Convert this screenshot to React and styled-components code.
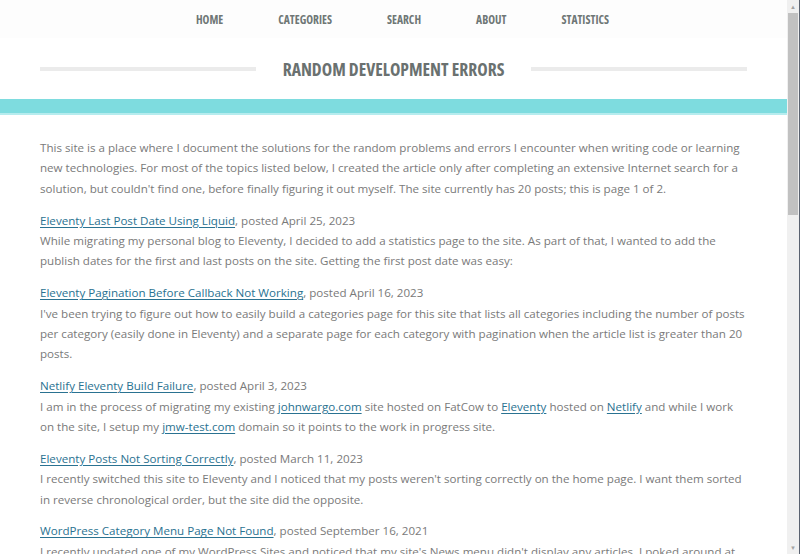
import React from "react";
import styled, { createGlobalStyle } from "styled-components";

const Global = createGlobalStyle`
  html, body { margin: 0; padding: 0; height: 100%; overflow: hidden; background: #fff; }
  #root { height: 100%; }
`;

const Frame = styled.div`
  display: flex;
  height: 554px;
  width: 800px;
`;

const Page = styled.div`
  flex: 1;
  min-width: 0;
  overflow: hidden;
  font-family: "Open Sans", "Liberation Sans", sans-serif;
`;

const Nav = styled.nav`
  display: flex;
  justify-content: center;
  align-items: center;
  gap: 55px;
  height: 38px;
  padding-left: 18px;
  background: #fdfdfd;
`;

const NavItem = styled.a`
  font-family: "Open Sans", sans-serif;
  font-stretch: 75%;
  font-weight: 700;
  font-size: 11.5px;
  color: #6f7776;
  text-decoration: none;
`;

const TitleRow = styled.div`
  display: flex;
  align-items: center;
  gap: 27px;
  padding: 18px 40px 0;
  height: 43px;
  box-sizing: border-box;
`;

const Rule = styled.div`
  flex: 1;
  height: 4px;
  background: #ebebeb;
`;

const Title = styled.h1`
  margin: 0;
  font-family: "Open Sans", sans-serif;
  font-stretch: 75%;
  font-weight: 700;
  font-size: 17.6px;
  color: #6a7170;
  white-space: nowrap;
`;

const Band = styled.div`
  margin-top: 18px;
  height: 14px;
  background: #7edcdf;
  border-bottom: 2px solid #b6ecee;
`;

const Content = styled.main`
  padding: 23px 40px 0;
  font-size: 11.6px;
  line-height: 20.4px;
  color: #7a7a7a;
`;

const Para = styled.p`
  margin: 0 0 11.4px;
`;

const Link = styled.a`
  color: #2a7291;
  text-decoration: underline;
  text-underline-offset: 2px;
`;

const Scrollbar = styled.div`
  width: 13px;
  flex: none;
  display: flex;
  flex-direction: column;
  background: #f0f0f0;
  border-right: 1px solid #5a6270;
  box-sizing: border-box;
`;

const Arrow = styled.div`
  height: 13px;
  display: flex;
  align-items: center;
  justify-content: center;
  font-size: 6px;
  color: #a3a3a3;
`;

const Thumb = styled.div`
  height: 202px;
  margin: 0 1px;
  background: #c1c1c1;
`;

const Spacer = styled.div`
  flex: 1;
`;

const posts = [
  {
    title: "Eleventy Last Post Date Using Liquid",
    date: "April 25, 2023",
    body: "While migrating my personal blog to Eleventy, I decided to add a statistics page to the site. As part of that, I wanted to add the publish dates for the first and last posts on the site. Getting the first post date was easy:",
  },
  {
    title: "Eleventy Pagination Before Callback Not Working",
    date: "April 16, 2023",
    body: "I've been trying to figure out how to easily build a categories page for this site that lists all categories including the number of posts per category (easily done in Eleventy) and a separate page for each category with pagination when the article list is greater than 20 posts.",
  },
  {
    title: "Netlify Eleventy Build Failure",
    date: "April 3, 2023",
    body: (
      <>
        I am in the process of migrating my existing <Link href="#">johnwargo.com</Link> site hosted on FatCow to{" "}
        <Link href="#">Eleventy</Link> hosted on <Link href="#">Netlify</Link> and while I work on the site, I setup my{" "}
        <Link href="#">jmw-test.com</Link> domain so it points to the work in progress site.
      </>
    ),
  },
  {
    title: "Eleventy Posts Not Sorting Correctly",
    date: "March 11, 2023",
    body: "I recently switched this site to Eleventy and I noticed that my posts weren't sorting correctly on the home page. I want them sorted in reverse chronological order, but the site did the opposite.",
  },
  {
    title: "WordPress Category Menu Page Not Found",
    date: "September 16, 2021",
    body: "I recently updated one of my WordPress Sites and noticed that my site's News menu didn't display any articles. I poked around at the settings and couldn't figure out what was wrong.",
  },
];

export default function App() {
  return (
    <>
      <Global />
      <Frame>
        <Page>
          <Nav>
            <NavItem href="#">HOME</NavItem>
            <NavItem href="#">CATEGORIES</NavItem>
            <NavItem href="#">SEARCH</NavItem>
            <NavItem href="#">ABOUT</NavItem>
            <NavItem href="#">STATISTICS</NavItem>
          </Nav>
          <TitleRow>
            <Rule />
            <Title>RANDOM DEVELOPMENT ERRORS</Title>
            <Rule />
          </TitleRow>
          <Band />
          <Content>
            <Para>
              This site is a place where I document the solutions for the random problems and errors I encounter when
              writing code or learning new technologies. For most of the topics listed below, I created the article only
              after completing an extensive Internet search for a solution, but couldn't find one, before finally figuring
              it out myself. The site currently has 20 posts; this is page 1 of 2.
            </Para>
            {posts.map((p) => (
              <Para key={p.title}>
                <Link href="#">{p.title}</Link>, posted {p.date}
                <br />
                {p.body}
              </Para>
            ))}
          </Content>
        </Page>
        <Scrollbar>
          <Arrow>▲</Arrow>
          <Thumb />
          <Spacer />
          <Arrow>▼</Arrow>
        </Scrollbar>
      </Frame>
    </>
  );
}
